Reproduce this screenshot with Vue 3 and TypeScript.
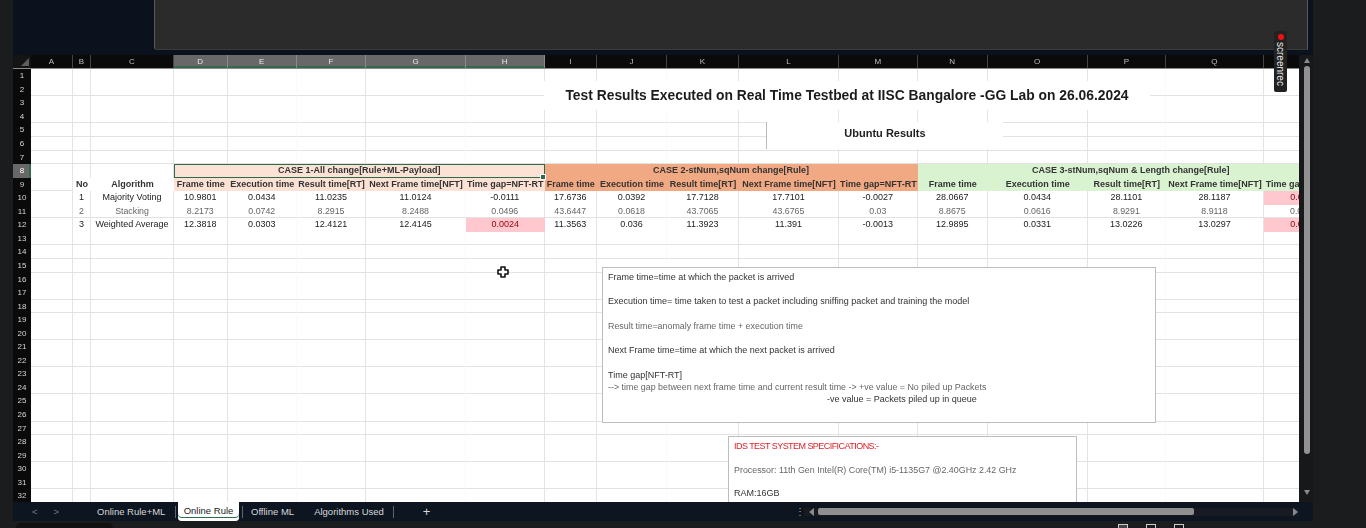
<script setup lang="ts">
interface Cell {
  text?: string
  span?: number
  cls?: string
}

const columns = ['A', 'B', 'C', 'D', 'E', 'F', 'G', 'H', 'I', 'J', 'K', 'L', 'M', 'N', 'O', 'P', 'Q', 'R']
const selectedCols = ['D', 'E', 'F', 'G', 'H']
const faintCols = [4, 6, 9, 15] // columns whose right gridline is lost in the screenshot
const ruledRows = [2, 4, 5, 6, 7, 9, 11, 13, 14, 15, 17, 18, 20, 22, 24, 26, 27, 29, 31]

const subHeads = ['Frame time', 'Execution time', 'Result time[RT]', 'Next Frame time[NFT]', 'Time gap=NFT-RT']

const dataRows: Record<number, string[]> = {
  10: ['1', 'Majority Voting', '10.9801', '0.0434', '11.0235', '11.0124', '-0.0111', '17.6736', '0.0392', '17.7128', '17.7101', '-0.0027', '28.0667', '0.0434', '28.1101', '28.1187', '0.0086'],
  11: ['2', 'Stacking', '8.2173', '0.0742', '8.2915', '8.2488', '0.0496', '43.6447', '0.0618', '43.7065', '43.6765', '0.03', '8.8675', '0.0616', '8.9291', '8.9118', '0.0173'],
  12: ['3', 'Weighted Average', '12.3818', '0.0303', '12.4121', '12.4145', '0.0024', '11.3563', '0.036', '11.3923', '11.391', '-0.0013', '12.9895', '0.0331', '13.0226', '13.0297', '0.0071'],
}
const badCells = ['12-6', '10-16', '12-16']

function cellsFor(row: number): Cell[] {
  const blank = (n: number, from: number) =>
    Array.from({ length: n }, (_, i) => ({ cls: faintCols.includes(from + i) ? 'faint' : '' }))

  if (row === 8) {
    return [
      ...blank(3, 0),
      { text: 'CASE 1-All change[Rule+ML-Payload]', span: 5, cls: 'head peach picked' },
      { text: 'CASE 2-stNum,sqNum change[Rule]', span: 5, cls: 'head orange' },
      { text: 'CASE 3-stNum,sqNum & Length change[Rule]', span: 5, cls: 'head green' },
    ]
  }
  if (row === 9) {
    const tint = (name: string) => subHeads.map((text) => ({ text, cls: `head ${name}` }))
    return [
      { cls: '' },
      { text: 'No', cls: 'head' },
      { text: 'Algorithm', cls: 'head' },
      ...tint('peach'),
      ...tint('orange'),
      ...tint('green'),
    ]
  }
  const data = dataRows[row]
  if (data) {
    const cells: Cell[] = [{ cls: '' }]
    data.forEach((text, i) => {
      const parts = ['value']
      if (row === 11) parts.push('dim')
      if (badCells.includes(`${row}-${i}`)) parts.push('bad')
      if (faintCols.includes(i + 1)) parts.push('faint')
      cells.push({ text, cls: parts.join(' ') })
    })
    return cells
  }
  return blank(18, 0)
}

const rows = Array.from({ length: 32 }, (_, i) => ({
  n: i + 1,
  ruled: ruledRows.includes(i + 1),
  cells: cellsFor(i + 1),
}))

const tabs = ['Online Rule+ML', 'Online Rule', 'Offline ML', 'Algorithms Used']
</script>

<template>
  <div class="screen">
    <div class="edge"></div>
    <div class="window">
      <div class="ribbon"><div class="ribbon-panel"></div></div>

      <div class="work">
        <div class="sheet">
          <div class="col-head">
            <div class="corner"><span class="corner-mark"></span></div>
            <div
              v-for="c in columns"
              :key="c"
              class="col-letter"
              :class="{ on: selectedCols.includes(c) }"
            >{{ c }}</div>
          </div>

          <div v-for="r in rows" :key="r.n" class="row" :class="{ ruled: r.ruled }">
            <div class="row-num" :class="{ on: r.n === 8 }">{{ r.n }}</div>
            <div
              v-for="(cell, i) in r.cells"
              :key="i"
              class="cell"
              :class="cell.cls"
              :style="cell.span ? { gridColumn: `span ${cell.span}` } : undefined"
            >{{ cell.text }}</div>
          </div>

          <div class="title-box">Test Results Executed on Real Time Testbed at IISC Bangalore -GG Lab on 26.06.2024</div>
          <div class="ubuntu-box">Ubuntu Results</div>

          <div class="note-box">
            <p>Frame time=time at which the packet is arrived</p>
            <p class="gap">Execution time= time taken to test a packet including sniffing packet and training the model</p>
            <p class="gap small">Result time=anomaly frame time + execution time</p>
            <p class="gap">Next Frame time=time at which the next packet is arrived</p>
            <p class="gap">Time gap[NFT-RT]</p>
            <p class="small">--&gt; time gap between next frame time and current result time -&gt; +ve value = No piled up Packets</p>
            <p class="indent">-ve value = Packets piled up in queue</p>
          </div>

          <div class="spec-box">
            <p class="red">IDS TEST SYSTEM SPECIFICATIONS:-</p>
            <p class="gap small">Processor: 11th Gen Intel(R) Core(TM) i5-1135G7 @2.40GHz 2.42 GHz</p>
            <p class="gap ram">RAM:16GB</p>
          </div>

          <svg class="cursor" width="12" height="12" viewBox="0 0 12 12">
            <path d="M4 1H8V4H11V8H8V11H4V8H1V4H4Z" fill="#fff" stroke="#111" stroke-width="1.6" stroke-linejoin="round" />
          </svg>
        </div>

        <div class="vscroll">
          <span class="arrow up"></span>
          <span class="vthumb"></span>
          <span class="arrow down"></span>
        </div>
      </div>

      <div class="tabbar">
        <div class="tab-nav"><span>&lt;</span><span>&gt;</span></div>
        <div class="tabs">
          <div
            v-for="(t, i) in tabs"
            :key="t"
            class="tab"
            :class="{ active: i === 1 }"
          >{{ t }}</div>
          <div class="tab-add">+</div>
        </div>
        <div class="hscroll-wrap">
          <span class="dots">⋮</span>
          <div class="hscroll">
            <span class="arrow left"></span>
            <span class="hthumb"></span>
            <span class="arrow right"></span>
          </div>
        </div>
      </div>

      <div class="status">
        <span class="task"></span>
        <div class="views">
          <span class="view on"></span>
          <span class="view"></span>
          <span class="view"></span>
        </div>
      </div>

      <div class="rec">
        <span class="rec-dot"></span>
        <span class="rec-text">screenrec</span>
      </div>
    </div>
    <div class="edge wide"></div>
  </div>
</template>

<style>
html,
body {
  margin: 0;
  background: #1b1c1d;
}
</style>

<style scoped>
.screen {
  display: flex;
  width: 1366px;
  height: 528px;
  overflow: hidden;
  background: #1b1c1d;
  font-family: 'Liberation Sans', Arial, sans-serif;
  color: #222;
}

.edge {
  width: 13px;
  flex: none;
  background: #1b1c1d;
}

.edge.wide {
  width: 53px;
}

.window {
  position: relative;
  width: 1300px;
  flex: none;
  display: flex;
  flex-direction: column;
  background: #0b121d;
}

/* --- top --- */
.ribbon {
  height: 55px;
  flex: none;
  padding-left: 141px;
  padding-right: 5px;
  box-sizing: border-box;
}

.ribbon-panel {
  height: 50px;
  background: #2b2b2b;
  border-left: 1px solid #5a5a5a;
  border-right: 1px solid #5a5a5a;
  border-bottom: 1px solid #3a3a3a;
  border-bottom-left-radius: 3px;
  box-sizing: border-box;
}

.work {
  display: flex;
  height: 447px;
  flex: none;
}

/* --- sheet --- */
.sheet {
  position: relative;
  width: 1286px;
  overflow: hidden;
  background: #fff;
  filter: blur(0.4px);
}

.col-head,
.row {
  display: grid;
  grid-template-columns: 18px 42px 18px 83px 53.5px 69.5px 69px 100px 78.5px 52.5px 70px 72px 100px 78.7px 70px 100px 78.3px 98px 80px;
}

.col-head {
  height: 13.3px;
  background: #0a0a0a;
  border-bottom: 1px solid #8a8a8a;
  box-sizing: content-box;
}

.corner {
  display: flex;
  align-items: flex-end;
  justify-content: flex-end;
  padding: 0 2px 2px 0;
  background: #141414;
}

.corner-mark {
  width: 0;
  height: 0;
  border-left: 8px solid transparent;
  border-bottom: 8px solid #5e5e5e;
}

.col-letter {
  font-size: 8px;
  line-height: 13px;
  text-align: center;
  color: #bdbdbd;
  border-right: 1px solid #444;
  box-sizing: border-box;
}

.col-letter.on {
  background: #686868;
  color: #e8e8e8;
  border-right-color: #8a8a8a;
  box-shadow: inset 0 -2px 0 #33694c;
}

.row {
  height: 13.55px;
}

.row-num {
  background: #0a0a0a;
  color: #d5d5d5;
  font-size: 8px;
  line-height: 13.5px;
  text-align: center;
}

.row-num.on {
  background: #686868;
  color: #fff;
  box-shadow: inset -2px 0 0 #33694c;
}

.cell {
  font-size: 9px;
  line-height: 13.5px;
  text-align: center;
  white-space: nowrap;
  overflow: hidden;
  border-right: 1px solid #e4e4e4;
  box-sizing: border-box;
  color: #222;
}

.cell.faint {
  border-right-color: #fafafa;
}

.row.ruled .cell {
  border-bottom: 1px solid #e2e2e2;
}

.cell.head {
  font-weight: bold;
  color: #333;
  border-right: none;
  border-bottom: none !important;
  overflow: visible;
}

.cell.peach {
  background: #fbe2d5;
}

.cell.orange {
  background: #f0a982;
}

.cell.green {
  background: #d9f2d0;
}

.cell.picked {
  outline: 1px solid #2f6b4b;
  outline-offset: -1px;
  position: relative;
}

.cell.picked::after {
  content: '';
  position: absolute;
  right: -1px;
  bottom: -2px;
  width: 4px;
  height: 4px;
  background: #2f6b4b;
  border: 1px solid #fff;
}

.cell.value.dim {
  font-size: 8.8px;
  color: #666;
}

.cell.bad {
  background: #ffc7ce;
  color: #9c0006;
  border-right: none;
}

/* --- floating boxes --- */
.title-box {
  position: absolute;
  left: 531px;
  top: 26px;
  width: 606px;
  height: 29px;
  background: #fff;
  font-size: 13.85px;
  font-weight: bold;
  line-height: 29px;
  text-align: center;
  white-space: nowrap;
  color: #1c1c1c;
}

.ubuntu-box {
  position: absolute;
  left: 753px;
  top: 67px;
  width: 237px;
  height: 27px;
  background: #fff;
  border-left: 1px solid #bbb;
  box-sizing: border-box;
  font-size: 11px;
  font-weight: bold;
  line-height: 23px;
  text-align: center;
  color: #222;
}

.note-box,
.spec-box {
  position: absolute;
  background: #fff;
  border: 1px solid #bdbdbd;
  box-sizing: border-box;
  padding: 3px 5px;
  font-size: 9px;
  line-height: 12.2px;
  color: #333;
}

.note-box {
  left: 589px;
  top: 212px;
  width: 554px;
  height: 156px;
}

.spec-box {
  left: 715px;
  top: 381px;
  width: 349px;
  height: 80px;
}

.note-box p,
.spec-box p {
  margin: 0;
  white-space: nowrap;
}

.note-box p.gap,
.spec-box p.gap {
  margin-top: 12.2px;
}

.note-box p.small,
.spec-box p.small {
  font-size: 8.9px;
  color: #666;
}

.note-box p.indent {
  padding-left: 219px;
}

.spec-box p.red {
  color: #e0202a;
  letter-spacing: -0.55px;
}

.spec-box p.ram {
  margin-top: 10.5px;
}

.cursor {
  position: absolute;
  left: 484px;
  top: 211px;
}

.rec {
  position: absolute;
  left: 1261px;
  top: 31px;
  width: 13px;
  height: 61px;
  background: #222;
  border-radius: 2px;
  display: flex;
  flex-direction: column;
  align-items: center;
  padding-top: 3px;
  box-sizing: border-box;
  gap: 2px;
}

.rec-dot {
  width: 6px;
  height: 6px;
  border-radius: 50%;
  background: #f01010;
}

.rec-text {
  writing-mode: vertical-rl;
  font-size: 10px;
  line-height: 13px;
  color: #e8e8e8;
}

/* --- scrollbars --- */
.vscroll {
  width: 14px;
  flex: none;
  background: #171819;
  display: flex;
  flex-direction: column;
  align-items: flex-start;
  padding: 3px 0 0 5px;
  box-sizing: border-box;
}

.vthumb {
  width: 6px;
  height: 388px;
  margin: 3px 0 36px;
  background: #929292;
  border-radius: 3px;
}

.arrow {
  width: 0;
  height: 0;
  flex: none;
}

.arrow.up {
  border-left: 3.5px solid transparent;
  border-right: 3.5px solid transparent;
  border-bottom: 5px solid #8a8a8a;
}

.arrow.down {
  border-left: 3.5px solid transparent;
  border-right: 3.5px solid transparent;
  border-top: 5px solid #8a8a8a;
}

.arrow.left {
  border-top: 4px solid transparent;
  border-bottom: 4px solid transparent;
  border-right: 5px solid #8a8a8a;
}

.arrow.right {
  border-top: 4px solid transparent;
  border-bottom: 4px solid transparent;
  border-left: 5px solid #8a8a8a;
}

/* --- tabs --- */
.tabbar {
  height: 19px;
  flex: none;
  display: flex;
  align-items: stretch;
  background: #0d1521;
  color: #d8d8d8;
  font-size: 9.5px;
}

.tab-nav {
  width: 78px;
  flex: none;
  display: flex;
  gap: 16px;
  padding-left: 19px;
  box-sizing: border-box;
  line-height: 19px;
  color: #7a7a7a;
}

.tabs {
  width: 704px;
  flex: none;
  display: flex;
}

.tab {
  line-height: 19px;
  white-space: nowrap;
  padding: 0 6px;
  position: relative;
}

.tab:nth-child(1) {
  width: 85px;
  box-sizing: border-box;
  height: 12px;
  margin-top: 4px;
  line-height: 12px;
  border-right: 1px solid #666;
}

.tab.active {
  width: 61px;
  margin-left: 2px;
  padding: 0;
  box-sizing: border-box;
  background: #fff;
  color: #222;
  border-radius: 0 0 4px 4px;
  text-align: center;
  line-height: 17px;
  box-shadow: inset 0 -3px 0 #fff, inset 0 -4px 0 #2f6b4b;
}

.tab:nth-child(3) {
  margin-left: 3px;
  padding-left: 8px;
  height: 12px;
  margin-top: 4px;
  line-height: 12px;
  border-left: 1px solid #666;
}

.tab:nth-child(4) {
  margin-left: 8px;
  padding-right: 9px;
  border-right: 1px solid #666;
  height: 12px;
  margin-top: 4px;
  line-height: 12px;
}

.tab-add {
  margin-left: 29px;
  font-size: 13px;
  line-height: 19px;
}

.hscroll-wrap {
  flex: 1;
  display: flex;
  align-items: center;
  gap: 6px;
  padding-right: 14px;
}

.dots {
  width: 3px;
  font-size: 10px;
  color: #aaa;
}

.hscroll {
  flex: 1;
  height: 8px;
  display: flex;
  align-items: center;
  background: #171a20;
  padding: 0 1px 0 5px;
}

.hthumb {
  width: 376px;
  height: 7px;
  margin: 0 auto 0 4px;
  background: #8f8f8f;
  border-radius: 2px;
}

.status {
  flex: 1;
  position: relative;
  background: #1b1c1d;
  display: flex;
  justify-content: flex-end;
  padding-right: 129px;
}

.task {
  position: absolute;
  left: 3px;
  top: 2px;
  width: 97px;
  height: 10px;
  background: #111;
  border-radius: 5px;
}

.views {
  display: flex;
  gap: 18px;
  padding-top: 3px;
}

.view {
  width: 10px;
  height: 4px;
  border: 1px solid #ccc;
  border-bottom: none;
  box-sizing: border-box;
}

.view.on {
  background: #444;
}
</style>
